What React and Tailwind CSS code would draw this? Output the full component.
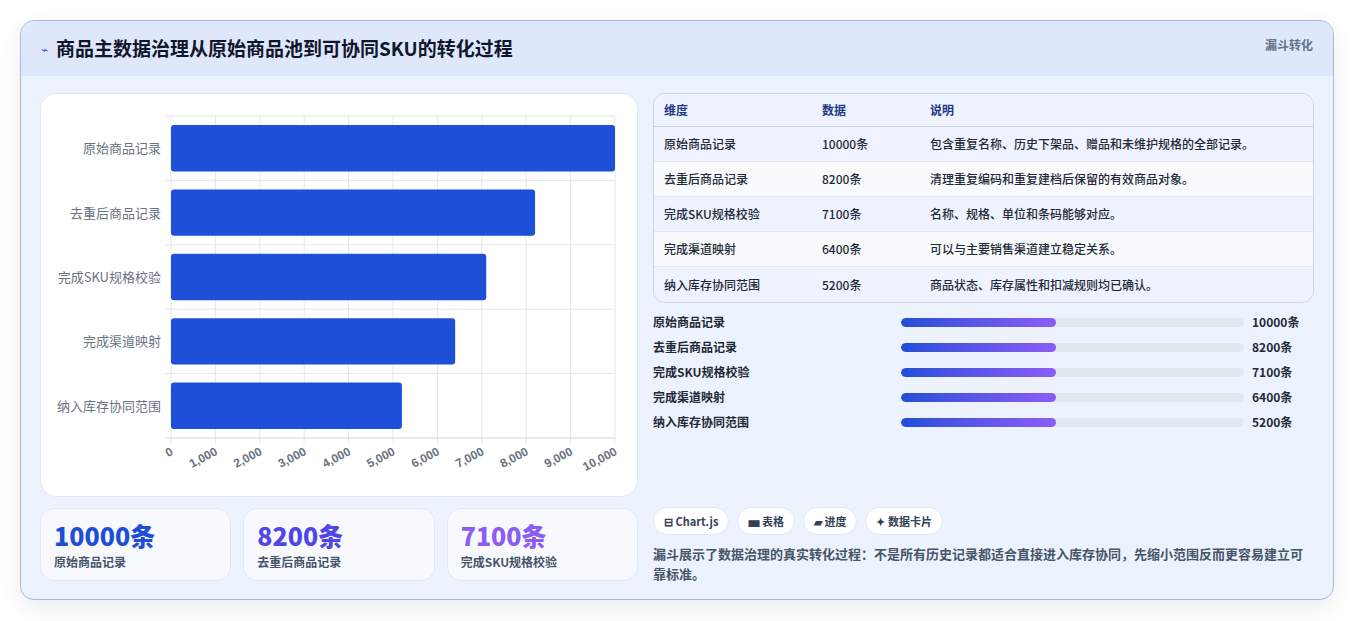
const rows = [
  ["原始商品记录", 10000, "包含重复名称、历史下架品、赠品和未维护规格的全部记录。"],
  ["去重后商品记录", 8200, "清理重复编码和重复建档后保留的有效商品对象。"],
  ["完成SKU规格校验", 7100, "名称、规格、单位和条码能够对应。"],
  ["完成渠道映射", 6400, "可以与主要销售渠道建立稳定关系。"],
  ["纳入库存协同范围", 5200, "商品状态、库存属性和扣减规则均已确认。"],
];

function Chart() {
  const x0 = 130, x1 = 574, top = 22, bot = 344;
  const rh = (bot - top) / 5;
  const sx = (v) => x0 + ((x1 - x0) * v) / 10000;
  return (
    <svg width="597" height="403" className="block">
      {Array.from({ length: 11 }).map((_, i) => (
        <line key={i} x1={sx(i * 1000)} x2={sx(i * 1000)} y1={top} y2={bot + 6} stroke="#e5e7eb" />
      ))}
      {Array.from({ length: 6 }).map((_, i) => (
        <line key={i} x1={x0 - 6} x2={x1} y1={top + i * rh} y2={top + i * rh} stroke={i === 5 ? "#cbd5e1" : "#e5e7eb"} />
      ))}
      {rows.map((r, i) => (
        <g key={i}>
          <rect x={x0} y={top + i * rh + 9} width={sx(r[1]) - x0} height={rh - 18} rx="3" fill="#1d4fd8" />
          <text x={x0 - 10} y={top + i * rh + rh / 2 + 5} textAnchor="end" fontSize="13" fill="#6b7280" fontFamily="'Noto Sans CJK SC', sans-serif">{r[0]}</text>
        </g>
      ))}
      {Array.from({ length: 11 }).map((_, i) => (
        <text key={i} transform={`translate(${sx(i * 1000) + 3},${bot + 16}) rotate(-28)`} textAnchor="end" fontSize="12" fontWeight="700" fill="#6b7280" fontFamily="'Liberation Sans', sans-serif">{(i * 1000).toLocaleString("en-US")}</text>
      ))}
    </svg>
  );
}

export default function App() {
  const font = { fontFamily: "'Noto Sans CJK SC', 'Noto Sans', sans-serif" };
  return (
    <div className="w-[1354px] h-[621px] bg-white pt-[20px] px-[20px]" style={font}>
      <div className="w-[1314px] h-[580px] rounded-[14px] border border-[#aab8e8] bg-[#edf3fe] overflow-hidden shadow-[0_8px_24px_rgba(0,0,0,0.08)]">
        <div className="h-[55px] bg-[#dfe7fd] flex items-center justify-between px-[20px]">
          <div className="flex items-center gap-[8px]">
            <span className="text-[#3b5bdb] text-[12px]">⌁</span>
            <h1 className="text-[19px] font-bold text-[#0f172a]">商品主数据治理从原始商品池到可协同SKU的转化过程</h1>
          </div>
          <span className="text-[12px] font-bold text-[#64748b] self-start mt-[15px]">漏斗转化</span>
        </div>
        <div className="flex gap-[15px] px-[19px] pt-[17px]">
          <div className="w-[598px] flex flex-col gap-[11px]">
            <div className="h-[404px] bg-white rounded-[16px] border border-[#e2e8f0]">
              <Chart />
            </div>
            <div className="grid grid-cols-3 gap-[12px]">
              {[["10000条", "text-[#1d4ed8]", "原始商品记录"], ["8200条", "text-[#4f46e5]", "去重后商品记录"], ["7100条", "text-[#8b5cf6]", "完成SKU规格校验"]].map((s) => (
                <div key={s[0]} className="h-[73px] rounded-[14px] border border-[#e2e8f0] bg-[#f7f9ff] px-[13px] pt-[10px]">
                  <div className={`text-[25px] leading-[32px] font-extrabold ${s[1]}`}>{s[0]}</div>
                  <div className="text-[12px] font-semibold text-[#475569] mt-[2px]">{s[2]}</div>
                </div>
              ))}
            </div>
          </div>
          <div className="w-[662px] flex flex-col">
            <div className="rounded-[12px] border border-[#cbd5e1] overflow-hidden text-[12px]">
              <div className="flex h-[33px] items-center bg-[#eef3ff] text-[#1e3a8a] font-bold border-b border-[#cbd5e1]">
                <div className="w-[158px] pl-[10px]">维度</div>
                <div className="w-[110px] pl-[10px]">数据</div>
                <div className="pl-[8px]">说明</div>
              </div>
              {rows.map((r, i) => (
                <div key={i} className={`flex h-[35px] items-center text-[#1f2937] font-medium ${i % 2 ? "bg-[#f8fafc]" : "bg-[#eef3ff]"} ${i < 4 ? "border-b border-[#e2e8f0]" : ""}`}>
                  <div className="w-[158px] pl-[10px]">{r[0]}</div>
                  <div className="w-[110px] pl-[10px]">{r[1]}条</div>
                  <div className="pl-[8px]">{r[2]}</div>
                </div>
              ))}
            </div>
            <div className="flex flex-col gap-[7px] mt-[10px]">
              {rows.map((r, i) => (
                <div key={i} className="flex items-center h-[18px] text-[12px] font-bold text-[#1f2937]">
                  <div className="w-[248px]">{r[0]}</div>
                  <div className="w-[343px] h-[9px] rounded-full bg-[#e2e8f0] overflow-hidden">
                    <div className="w-[155px] h-full rounded-full bg-gradient-to-r from-[#1d4ed8] to-[#8b5cf6]" />
                  </div>
                  <div className="ml-[8px]">{r[1]}条</div>
                </div>
              ))}
            </div>
            <div className="flex gap-[8px] mt-[76px]">
              {["⊟ Chart.js", "▅ 表格", "▰ 进度", "✦ 数据卡片"].map((c) => (
                <span key={c} className="h-[28px] px-[10px] flex items-center rounded-full bg-white border border-[#e2e8f0] text-[11px] font-bold text-[#334155]">{c}</span>
              ))}
            </div>
            <p className="mt-[9px] text-[13px] leading-[20px] font-semibold text-[#475569]">漏斗展示了数据治理的真实转化过程：不是所有历史记录都适合直接进入库存协同，先缩小范围反而更容易建立可靠标准。</p>
          </div>
        </div>
      </div>
    </div>
  );
}
